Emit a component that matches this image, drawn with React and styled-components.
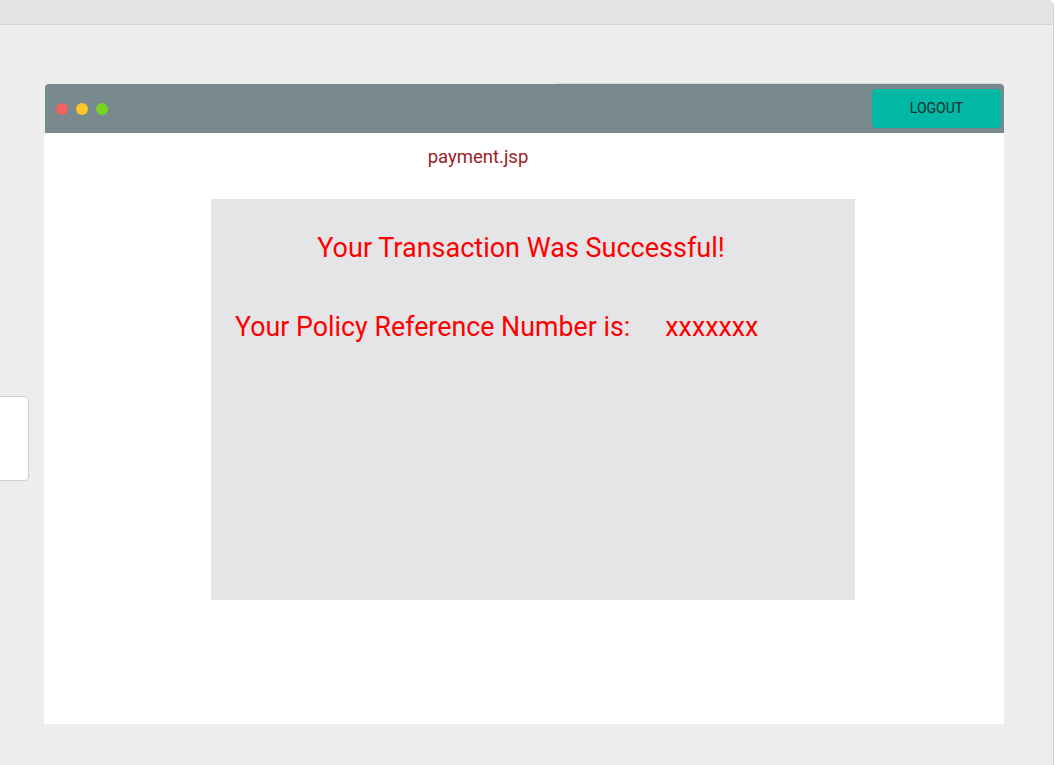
import styled, { createGlobalStyle } from "styled-components";

const GlobalStyle = createGlobalStyle`
  html, body {
    margin: 0;
    padding: 0;
    background: #ffffff;
    font-family: Roboto, "Liberation Sans", Arial, sans-serif;
  }
`;

const Frame = styled.div`
  width: 1053px;
  height: 765px;
  background: #ededed;
  border-right: 1px solid #d2d2d2;
  border-top-right-radius: 6px;
  overflow: hidden;
`;

const TopBar = styled.div`
  height: 24px;
  background: #e3e3e3;
  border-bottom: 1px solid #d6d6d6;
`;

const Stage = styled.div`
  position: relative;
  padding: 59px 0 0 44px;
`;

const SideCard = styled.div`
  position: absolute;
  left: -10px;
  top: 371px;
  width: 37px;
  height: 83px;
  background: #ffffff;
  border: 1px solid #cfcfcf;
  border-radius: 4px;
`;

const Window = styled.div`
  width: 960px;
  height: 640px;
  display: flex;
  flex-direction: column;
`;

const Header = styled.div`
  position: relative;
  height: 49px;
  margin-left: 1px;
  background: #798a8f;
  border-radius: 4px 4px 0 0;
  display: flex;
  align-items: center;
  padding: 0 3px 0 11px;

  &::after {
    content: "";
    position: absolute;
    left: 511px;
    right: 2px;
    top: -1px;
    height: 1px;
    background: #d4d9da;
  }
`;

const Dots = styled.div`
  display: flex;
  gap: 8px;
  flex: 1;
`;

const Dot = styled.span`
  width: 12px;
  height: 12px;
  border-radius: 50%;
  background: ${(p) => p.color};
`;

const LogoutButton = styled.button`
  width: 129px;
  height: 39px;
  margin-top: -1px;
  border: none;
  border-radius: 4px;
  background: #00b8a3;
  color: #1d2a2a;
  font-family: Roboto, "Liberation Sans", Arial, sans-serif;
  font-size: 14px;
  padding: 0;
  cursor: pointer;
`;

const Body = styled.div`
  flex: 1;
  background: #ffffff;
  display: flex;
  flex-direction: column;
`;

const PageName = styled.div`
  height: 48px;
  padding: 12px 92px 0 0;
  box-sizing: border-box;
  text-align: center;
  color: #9b2226;
  font-size: 18.5px;
  line-height: 24px;
`;

const Panel = styled.div`
  width: 644px;
  height: 401px;
  margin: 18px 0 0 167px;
  background: #e5e5e7;
  color: #ff0000;
  font-size: 27px;
  line-height: 32px;
  padding-top: 33px;
  box-sizing: border-box;
`;

const Heading = styled.div`
  text-align: center;
  padding-right: 24px;
`;

const RefRow = styled.div`
  display: flex;
  gap: 35px;
  margin-top: 47px;
  padding-left: 24px;
  font-size: 26.8px;
`;

export default function App() {
  return (
    <>
      <GlobalStyle />
      <Frame>
        <TopBar />
        <Stage>
          <SideCard />
          <Window>
            <Header>
              <Dots>
                <Dot color="#f36262" />
                <Dot color="#fdc72b" />
                <Dot color="#79d220" />
              </Dots>
              <LogoutButton>LOGOUT</LogoutButton>
            </Header>
            <Body>
              <PageName>payment.jsp</PageName>
              <Panel>
                <Heading>Your Transaction Was Successful!</Heading>
                <RefRow>
                  <span>Your Policy Reference Number is:</span>
                  <span>xxxxxxx</span>
                </RefRow>
              </Panel>
            </Body>
          </Window>
        </Stage>
      </Frame>
    </>
  );
}
